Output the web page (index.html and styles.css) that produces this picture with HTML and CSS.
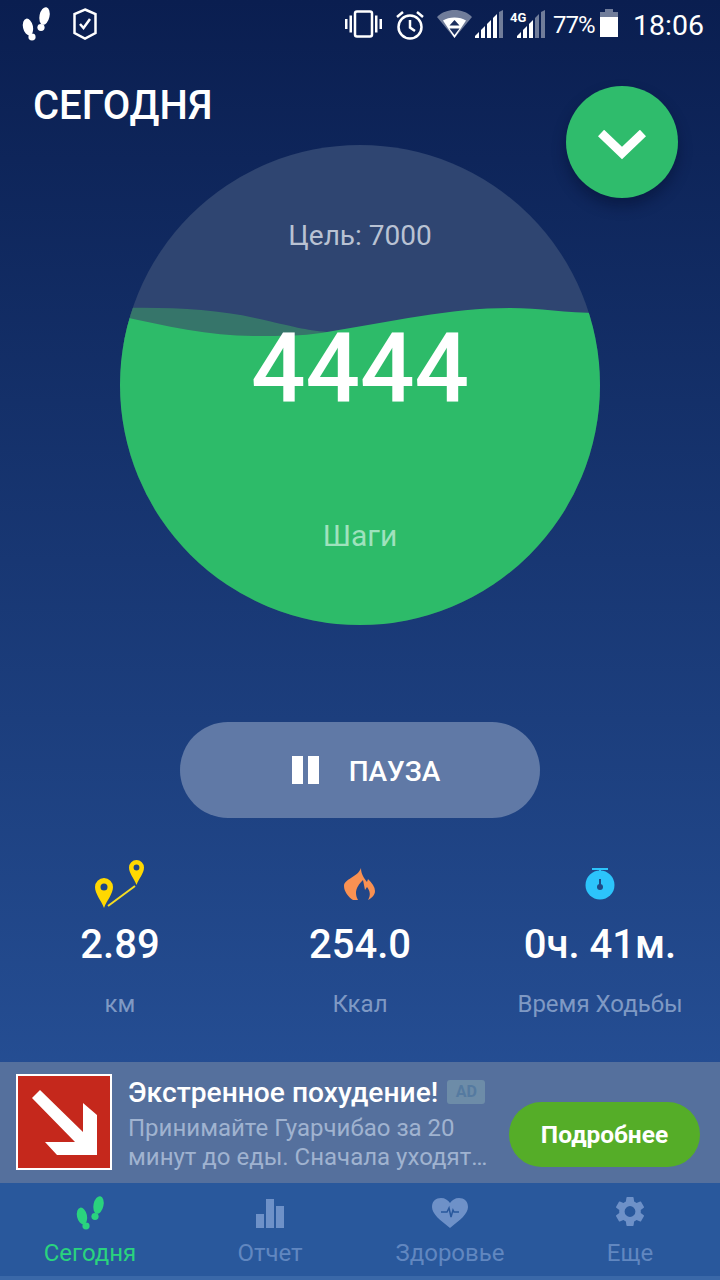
FILE: index.html
```html
<!DOCTYPE html>
<html lang="ru">
<head>
<meta charset="utf-8">
<title>Сегодня</title>
<link rel="stylesheet" href="styles.css">
</head>
<body>
<svg class="defs" width="0" height="0" aria-hidden="true">
  <symbol id="steps" viewBox="20 5 32 38">
    <ellipse cx="28" cy="27" rx="5" ry="8.5" transform="rotate(-12 28 27)"/>
    <ellipse cx="32" cy="37" rx="3.6" ry="3.4"/>
    <ellipse cx="44.5" cy="16" rx="5" ry="9" transform="rotate(12 44.5 16)"/>
    <ellipse cx="41" cy="27.5" rx="3.6" ry="3.4"/>
  </symbol>
  <symbol id="pin" viewBox="0 0 18 30">
    <path fill-rule="evenodd" d="M9 30C6 22 0 16 0 9a9 9 0 0 1 18 0c0 7-6 13-9 21zM9 5.500a3.500 3.500 0 1 0 0 7 3.500 3.500 0 0 0 0-7z"/>
  </symbol>
</svg>
<div class="page">
  <header class="status">
    <svg class="ic-steps" width="32" height="38"><use href="#steps"/></svg>
    <svg class="ic-shield" width="24" height="32" viewBox="0 0 24 32">
      <path class="line" d="M12 1.500 22.500 6v19L12 30.500 1.500 25V6z"/>
      <path class="line" d="M7 16l3.500 4L17 11"/>
    </svg>
    <svg class="ic-vib" width="37" height="28" viewBox="0 0 37 28">
      <path class="solid" d="M0 9h2.500v10H0zM4.500 5.500H7v17H4.500zM30 5.500h2.500v17H30zM34.500 9H37v10h-2.500z"/>
      <rect class="line" x="10" y="1.500" width="17" height="25" rx="2"/>
    </svg>
    <svg class="ic-alarm" width="30" height="30" viewBox="0 0 30 30">
      <circle class="line" cx="15" cy="17" r="11.500"/>
      <path class="line" d="M15 10v7.500l5 3.500M2 7l6-5M28 7l-6-5"/>
    </svg>
    <svg class="ic-wifi" width="35" height="28" viewBox="0 0 35 28">
      <path class="faint" d="M0 7C5 2 11 0 17.500 0S30 2 35 7L17.500 28z"/>
      <path class="solid" d="M6 10.500C9 8.500 13 7.500 17.500 7.500S26 8.500 29 10.500L17.500 28z"/>
      <path class="cut" d="M17.500 10l5 5.500h-10zM17.500 25l-5-6.500h10z"/>
    </svg>
    <svg class="ic-signal" width="28" height="28" viewBox="0 0 28 28">
      <path class="solid" d="M0 28v-2l4-4v6zM6 28v-8l4-4v12zM12 28V14l4-4v18zM18 28V8l4-4v24z" opacity="1"/>
      <path class="faint" d="M24 28V2l4-2v28z"/>
    </svg>
    <div class="net">
      <span class="net-label">4G</span>
      <svg width="28" height="28" viewBox="0 0 28 28">
        <path class="solid" d="M0 28v-2l4-4v6zM6 28v-8l4-4v12zM12 28V14l4-4v18z"/>
        <path class="faint" d="M18 28V8l4-4v24zM24 28V2l4-2v28z"/>
      </svg>
    </div>
    <span class="pct">77%</span>
    <svg class="ic-batt" width="18" height="28" viewBox="0 0 18 28">
      <path class="faint" d="M5 0h8v3h5v7H0V3h5z"/>
      <path class="solid" d="M0 8h18v20H0z"/>
    </svg>
    <span class="time">18:06</span>
  </header>

  <h1 class="title">СЕГОДНЯ</h1>
  <button class="fab" type="button" aria-label="Свернуть">
    <svg width="48" height="30" viewBox="0 0 48 30"><path d="M3 3l21 20L45 3"/></svg>
  </button>

  <section class="dial">
    <svg class="dial-art" width="480" height="480" viewBox="120 145 480 480">
      <defs><clipPath id="disc"><circle cx="360" cy="385" r="240"/></clipPath></defs>
      <g clip-path="url(#disc)">
        <rect class="dial-empty" x="120" y="145" width="480" height="480"/>
        <path class="wave-back" d="M120 308C170 307 215 309 255 318S305 330 327 332L330 345H120z"/>
        <path class="wave-front" d="M120 316C165 326 210 336 253 336C285 336 305 336 327 332C390 322 450 308 510 308C540 308 565 313 600 313V640H120z"/>
      </g>
    </svg>
    <div class="goal">Цель: 7000</div>
    <div class="count">4444</div>
    <div class="unit">Шаги</div>
  </section>

  <button class="pause" type="button">
    <span class="pause-icon"><i></i><i></i></span>
    <span class="pause-label">ПАУЗА</span>
  </button>

  <section class="stats">
    <div class="stat">
      <svg class="stat-icon" width="50" height="50" viewBox="0 0 50 50">
        <use href="#pin" class="pin" x="0" y="20" width="18" height="30"/>
        <use href="#pin" class="pin" x="34" y="2" width="15" height="25"/>
        <path class="route" d="M13 48l27-20"/>
      </svg>
      <div class="stat-value">2.89</div>
      <div class="stat-label">км</div>
    </div>
    <div class="stat">
      <svg class="stat-icon" width="50" height="50" viewBox="0 0 50 50">
        <path class="flame" d="M26 10C26 16 29 20 32 24L33 21C37 25 40 29 40 33C40 37 37 40 33 42C36 37 35 33 32 29L30 32L28 22C24 26 21 30 21 35C21 38 22 40 23 42H18C13 39 9 33 9 28C9 21 23 19 26 10z"/>
      </svg>
      <div class="stat-value">254.0</div>
      <div class="stat-label">Ккал</div>
    </div>
    <div class="stat">
      <svg class="stat-icon" width="50" height="50" viewBox="0 0 50 50">
        <path class="watch-top" d="M17 10h16v2H26v6h-2v-6h-7z"/>
        <circle class="watch" cx="25" cy="27" r="14.500"/>
        <circle class="watch-dot" cx="25" cy="29" r="3"/>
        <path class="watch-hand" d="M25 21v8"/>
      </svg>
      <div class="stat-value">0ч. 41м.</div>
      <div class="stat-label">Время Ходьбы</div>
    </div>
  </section>

  <aside class="ad">
    <svg class="ad-image" width="96" height="96" viewBox="0 0 96 96">
      <rect class="ad-frame" x="1" y="1" width="94" height="94"/>
      <path class="ad-arrow" d="M16 24l8-8 43 42V29l14 12v40H41L29 68h30z"/>
    </svg>
    <div class="ad-copy">
      <div class="ad-head">
        <span class="ad-title">Экстренное похудение!</span>
        <span class="ad-badge">AD</span>
      </div>
      <p class="ad-text">Принимайте Гуарчибао за 20<br>минут до еды. Сначала уходят…</p>
    </div>
    <button class="ad-cta" type="button">Подробнее</button>
  </aside>

  <nav class="tabs">
    <a class="tab tab-on">
      <svg width="32" height="38"><use href="#steps"/></svg>
      <span>Сегодня</span>
    </a>
    <a class="tab">
      <svg width="28" height="38" viewBox="0 0 28 38">
        <path d="M0 20h8v14H0zM10 5h8v29h-8zM20 12h8v22h-8z"/>
      </svg>
      <span>Отчет</span>
    </a>
    <a class="tab">
      <svg width="36" height="38" viewBox="0 0 36 38">
        <path d="M18 34C8 26 0 20 0 13 0 7 4 4 9 4c4 0 7 2 9 5 2-3 5-5 9-5 5 0 9 3 9 9 0 7-8 13-18 21z"/>
        <path class="pulse" d="M9 18h6l2-4 2 9 2-7 1 2h5"/>
      </svg>
      <span>Здоровье</span>
    </a>
    <a class="tab">
      <svg width="36" height="38" viewBox="0 1 24 24">
        <path d="M19.140 12.940c.04-.3.060-.61.060-.94 0-.32-.02-.64-.07-.94l2.030-1.580a.49.49 0 0 0 .12-.61l-1.920-3.320a.49.49 0 0 0-.59-.22l-2.390.96c-.5-.38-1.030-.7-1.620-.94l-.36-2.540a.48.48 0 0 0-.48-.41h-3.840a.48.48 0 0 0-.47.41l-.36 2.540c-.59.24-1.130.57-1.620.94l-2.390-.96a.49.49 0 0 0-.59.22L2.740 8.870a.48.48 0 0 0 .12.61l2.030 1.580c-.05.3-.09.63-.09.94s.02.64.07.94l-2.030 1.580a.49.49 0 0 0-.12.61l1.920 3.320c.12.22.37.29.59.22l2.390-.96c.5.38 1.030.7 1.620.94l.36 2.540c.05.24.24.41.48.41h3.840c.24 0 .44-.17.47-.41l.36-2.540c.59-.24 1.130-.56 1.620-.94l2.390.96c.22.080.47 0 .59-.22l1.920-3.320a.48.48 0 0 0-.12-.61zM12 15.600a3.600 3.600 0 1 1 0-7.200 3.600 3.600 0 0 1 0 7.200z"/>
      </svg>
      <span>Еще</span>
    </a>
  </nav>
</div>
</body>
</html>
```

FILE: styles.css
```css
* { box-sizing: border-box; }
html, body { margin: 0; padding: 0; }
body { font-family: Roboto, "Noto Sans", sans-serif; color: #fff; }
.defs { position: absolute; }
button { font-family: inherit; border: 0; padding: 0; color: inherit; }

.page {
  position: relative;
  width: 720px;
  height: 1280px;
  display: flex;
  flex-direction: column;
  overflow: hidden;
  background: linear-gradient(180deg, #0a1e50 0%, #2a57a0 100%);
}

/* status bar */
.status {
  height: 50px;
  flex: none;
  display: flex;
  align-items: flex-start;
  padding: 5px 0 0 20px;
  fill: #fff;
}
.status > * { flex: none; }
.status .line { fill: none; stroke: #fff; stroke-width: 2.500; }
.status .solid { fill: #fff; }
.status .faint { fill: #fff; opacity: .42; }
.status .cut { fill: #1b2f5f; }
.ic-shield { margin: 3px 0 0 21px; }
.ic-vib { margin: 5px 0 0 248px; }
.ic-alarm { margin: 5px 0 0 13px; }
.ic-wifi { margin: 5px 0 0 12px; }
.ic-signal { margin: 5px 0 0 3px; }
.net { position: relative; margin: 5px 0 0 14px; }
.net svg { display: block; }
.net-label { position: absolute; left: -7px; top: 1px; font-size: 13px; font-weight: 700; line-height: 14px; }
.pct { width: 42px; margin: 3px 0 0 8px; font-size: 24px; line-height: 34px; letter-spacing: -1px; }
.ic-batt { margin: 4px 0 0 5px; }
.time { margin: 1px 0 0 15px; font-size: 28.500px; line-height: 40px; }

/* header */
.title {
  margin: 35px 0 0 33px;
  font-size: 40px;
  line-height: 42px;
  font-weight: 500;
}
.fab {
  position: absolute;
  left: 566px;
  top: 86px;
  z-index: 2;
  width: 112px;
  height: 112px;
  padding-top: 5px;
  border-radius: 50%;
  background: #2fbc6c;
  box-shadow: 0 8px 14px rgba(4, 14, 45, .45);
  display: flex;
  align-items: center;
  justify-content: center;
}
.fab svg { fill: none; stroke: #fff; stroke-width: 9; }

/* dial */
.dial {
  position: relative;
  width: 480px;
  height: 480px;
  margin: 18px auto 0;
  display: flex;
  flex-direction: column;
  align-items: center;
}
.dial-art { position: absolute; inset: 0; }
.dial-empty { fill: #2f4571; }
.wave-back { fill: #36756a; }
.wave-front { fill: #2dbb69; }
.goal, .count, .unit { position: relative; }
.goal { margin-top: 73px; font-size: 28px; line-height: 36px; color: #b9c2d3; }
.count { margin-top: 59px; font-size: 96px; line-height: 110px; font-weight: 500; }
.unit { margin-top: 93px; font-size: 30px; line-height: 40px; color: #9fe2bd; }

/* pause */
.pause {
  width: 360px;
  height: 96px;
  margin: 97px auto 0;
  padding-left: 12px;
  border-radius: 48px;
  background: #6079a6;
  display: flex;
  align-items: center;
  justify-content: center;
  gap: 30px;
  font-size: 28px;
  font-weight: 500;
}
.pause-icon { display: flex; gap: 5px; }
.pause-icon i { display: block; width: 11px; height: 28px; background: #fff; }
.pause-label { margin-top: 2px; }

/* stats */
.stats { display: grid; grid-template-columns: repeat(3, 1fr); margin-top: 40px; }
.stat { display: flex; flex-direction: column; align-items: center; }
.stat-icon { display: block; }
.stat-value { margin-top: 12px; font-size: 40px; line-height: 50px; font-weight: 500; }
.stat-label { margin-top: 19px; font-size: 24px; line-height: 30px; color: #7f99c4; }
.pin { fill: #ffd800; }
.route { stroke: #f5dc22; stroke-width: 2; fill: none; }
.flame { fill: #f99152; }
.watch { fill: #2cc4fb; }
.watch-top { fill: #2cc4fb; }
.watch-dot { fill: #1f4a85; }
.watch-hand { stroke: #1f4a85; stroke-width: 2; }

/* ad */
.ad {
  margin-top: auto;
  height: 121px;
  display: flex;
  align-items: flex-start;
  padding: 12px 20px 0 16px;
  background: #55709d;
}
.ad-image { display: block; flex: none; }
.ad-frame { fill: #c5281c; stroke: #fff; stroke-width: 2; }
.ad-arrow { fill: #fff; }
.ad-copy { flex: 1; min-width: 0; margin-left: 16px; }
.ad-head { display: flex; align-items: center; gap: 9px; height: 36px; }
.ad-title { font-size: 28.200px; font-weight: 500; white-space: nowrap; }
.ad-badge {
  width: 38px;
  height: 24px;
  border-radius: 3px;
  background: #6d8ca8;
  color: #557aa0;
  font-size: 16px;
  font-weight: 700;
  line-height: 24px;
  text-align: center;
}
.ad-text { margin: 4px 0 0; font-size: 24px; line-height: 29px; color: #a0b3d0; white-space: nowrap; }
.ad-cta {
  flex: none;
  width: 191px;
  height: 65px;
  margin-top: 28px;
  border-radius: 33px;
  background: #55ad28;
  font-size: 24.500px;
  font-weight: 700;
}

/* tabs */
.tabs {
  height: 97px;
  display: grid;
  grid-template-columns: repeat(4, 1fr);
  padding-bottom: 4px;
  background: linear-gradient(180deg, #29589c 0 93px, #3a68a8 93px);
}
.tab {
  display: flex;
  flex-direction: column;
  align-items: center;
  padding-top: 11px;
  color: #6187c0;
  fill: #6e91c8;
  font-size: 24px;
  line-height: 30px;
}
.tab svg { display: block; margin-bottom: 6px; }
.tab-on { color: #2ad37e; fill: #2ad37e; }
.pulse { fill: none; stroke: #29589c; stroke-width: 1.500; }
```
